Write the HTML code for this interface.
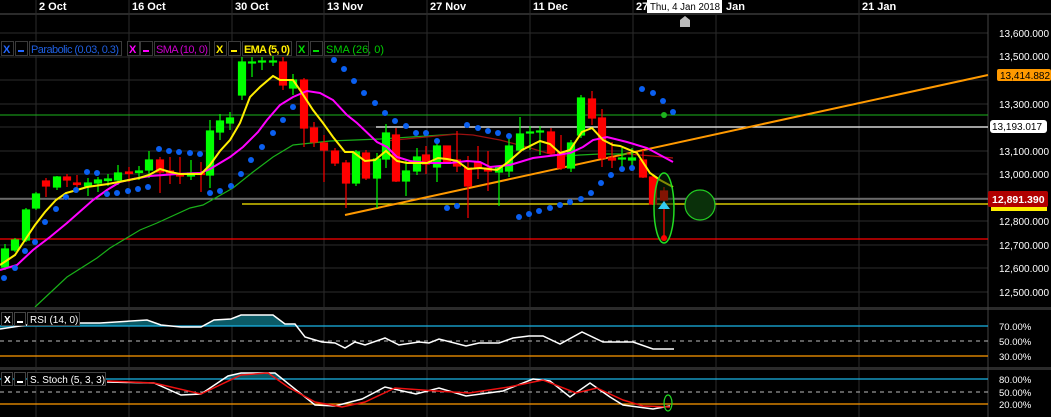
<!DOCTYPE html>
<html><head><meta charset="utf-8"><style>
html,body{margin:0;padding:0;background:#000;width:1051px;height:417px;overflow:hidden}
svg{display:block;font-family:"Liberation Sans",sans-serif}
</style></head><body>
<svg width="1051" height="417" viewBox="0 0 1051 417" xmlns="http://www.w3.org/2000/svg">
<rect width="1051" height="417" fill="#000"/>
<g stroke="#2b2b2b" stroke-width="1">
<line x1="0" y1="33" x2="988" y2="33"/><line x1="0" y1="57" x2="988" y2="57"/><line x1="0" y1="80" x2="988" y2="80"/><line x1="0" y1="104" x2="988" y2="104"/><line x1="0" y1="127" x2="988" y2="127"/><line x1="0" y1="151" x2="988" y2="151"/><line x1="0" y1="174" x2="988" y2="174"/><line x1="0" y1="198" x2="988" y2="198"/><line x1="0" y1="221" x2="988" y2="221"/><line x1="0" y1="245" x2="988" y2="245"/><line x1="0" y1="268" x2="988" y2="268"/><line x1="0" y1="292" x2="988" y2="292"/>
<line x1="36" y1="0" x2="36" y2="417"/><line x1="129" y1="0" x2="129" y2="417"/><line x1="232" y1="0" x2="232" y2="417"/><line x1="324" y1="0" x2="324" y2="417"/><line x1="427" y1="0" x2="427" y2="417"/><line x1="530" y1="0" x2="530" y2="417"/><line x1="633" y1="0" x2="633" y2="417"/><line x1="716" y1="0" x2="716" y2="417"/><line x1="859" y1="0" x2="859" y2="417"/>
</g>
<rect x="0" y="13" width="1051" height="2" fill="#2b2b2b"/>
<rect x="0" y="307" width="1051" height="3" fill="#2b2b2b"/>
<rect x="0" y="367" width="1051" height="3" fill="#2b2b2b"/>
<line x1="988" y1="14" x2="988" y2="417" stroke="#444"/>
<g fill="#fff" font-size="11" font-weight="bold">
<text x="39" y="10">2 Oct</text><text x="132" y="10">16 Oct</text><text x="235" y="10">30 Oct</text><text x="327" y="10">13 Nov</text><text x="430" y="10">27 Nov</text><text x="533" y="10">11 Dec</text><text x="636" y="10">27</text><text x="726" y="10">Jan</text><text x="862" y="10">21 Jan</text>
</g>
<rect x="647" y="0" width="75" height="13" fill="#fff"/>
<text x="650" y="10" font-size="10" fill="#000" textLength="70" lengthAdjust="spacingAndGlyphs">Thu, 4 Jan 2018</text>
<path d="M680 27 V20 L685 16 L690 20 V27 Z" fill="#bbb"/>
<line x1="0" y1="115" x2="988" y2="115" stroke="#1db31d"/>
<line x1="376" y1="127" x2="988" y2="127" stroke="#fff" stroke-width="1.3"/>
<line x1="0" y1="199" x2="988" y2="199" stroke="#aaa"/>
<line x1="242" y1="204" x2="988" y2="204" stroke="#ffee00" stroke-width="1.3"/>
<line x1="0" y1="239" x2="988" y2="239" stroke="#ff0000" stroke-width="1.3"/>
<line x1="345" y1="215" x2="988" y2="75" stroke="#ff9900" stroke-width="2"/>
<polyline fill="none" stroke="#19b019" stroke-width="1.2" points="35,307 67,277 97,258 110,248 140,230 157,223 190,208 203,205 233,188 253,172 273,157 293,145 330,141 380,139 457,134"/>
<polyline fill="none" stroke="#9a1010" stroke-width="1.2" points="385,141 457,134 473,135 500,140 527,147 550,154 567,156"/>
<polyline fill="none" stroke="#19b019" stroke-width="1.2" points="567,156 580,155 600,154 627,154"/>
<polyline fill="none" stroke="#b01010" stroke-width="1.2" points="627,154 653,156 673,158"/>
<g stroke-width="1.2">
<g stroke="#00ff00" fill="#00ff00">
<line x1="5" y1="244" x2="5" y2="270"/><rect x="1.5" y="249" width="7" height="18"/>
<line x1="15" y1="238" x2="15" y2="252"/><rect x="11.5" y="240" width="7" height="10"/>
<line x1="26" y1="208" x2="26" y2="242"/><rect x="22.5" y="210" width="7" height="30"/>
<line x1="36" y1="192" x2="36" y2="210"/><rect x="32.5" y="194" width="7" height="14"/>
<line x1="57" y1="176" x2="57" y2="190"/><rect x="53.5" y="177" width="7" height="10"/>
<line x1="88" y1="178" x2="88" y2="196"/><rect x="84.5" y="183" width="7" height="3"/>
<line x1="98" y1="177" x2="98" y2="192"/><rect x="94.5" y="180" width="7" height="3"/>
<line x1="108" y1="174" x2="108" y2="186"/><rect x="104.5" y="179" width="7" height="1.5"/>
<line x1="118" y1="165" x2="118" y2="185"/><rect x="114.5" y="173" width="7" height="7"/>
<line x1="139" y1="166" x2="139" y2="180"/><rect x="135.5" y="171" width="7" height="1.5"/>
<line x1="149" y1="151" x2="149" y2="178"/><rect x="145.5" y="160" width="7" height="10"/>
<line x1="191" y1="160" x2="191" y2="180"/><rect x="187.5" y="173" width="7" height="3"/>
<line x1="210" y1="120" x2="210" y2="188"/><rect x="206.5" y="131" width="7" height="44"/>
<line x1="220" y1="114" x2="220" y2="140"/><rect x="216.5" y="121" width="7" height="11"/>
<line x1="230" y1="112" x2="230" y2="130"/><rect x="226.5" y="118" width="7" height="5"/>
<line x1="242" y1="57" x2="242" y2="100"/><rect x="238.5" y="62" width="7" height="33"/>
<line x1="252" y1="57" x2="252" y2="77"/><rect x="248.5" y="62" width="7" height="1"/>
<line x1="262" y1="57" x2="262" y2="70"/><rect x="258.5" y="61" width="7" height="1"/>
<line x1="273" y1="55" x2="273" y2="66"/><rect x="269.5" y="61" width="7" height="1"/>
<line x1="293" y1="74" x2="293" y2="95"/><rect x="289.5" y="80" width="7" height="8"/>
<line x1="356" y1="150" x2="356" y2="186"/><rect x="352.5" y="152" width="7" height="31"/>
<line x1="377" y1="153" x2="377" y2="208"/><rect x="373.5" y="159" width="7" height="19"/>
<line x1="386" y1="124" x2="386" y2="168"/><rect x="382.5" y="133" width="7" height="26"/>
<line x1="406" y1="160" x2="406" y2="196"/><rect x="402.5" y="171" width="7" height="10"/>
<line x1="417" y1="148" x2="417" y2="175"/><rect x="413.5" y="157" width="7" height="14"/>
<line x1="437" y1="143" x2="437" y2="182"/><rect x="433.5" y="146" width="7" height="21"/>
<line x1="499" y1="166" x2="499" y2="206"/><rect x="495.5" y="167" width="7" height="5"/>
<line x1="509" y1="136" x2="509" y2="177"/><rect x="505.5" y="146" width="7" height="25"/>
<line x1="520" y1="117" x2="520" y2="152"/><rect x="516.5" y="134" width="7" height="16"/>
<line x1="530" y1="126" x2="530" y2="150"/><rect x="526.5" y="132" width="7" height="1"/>
<line x1="540" y1="126" x2="540" y2="155"/><rect x="536.5" y="131" width="7" height="1"/>
<line x1="571" y1="140" x2="571" y2="172"/><rect x="567.5" y="143" width="7" height="25"/>
<line x1="581" y1="95" x2="581" y2="138"/><rect x="577.5" y="98" width="7" height="37"/>
<line x1="622" y1="148" x2="622" y2="171"/><rect x="618.5" y="158" width="7" height="1"/>
<line x1="632" y1="148" x2="632" y2="167"/><rect x="628.5" y="158" width="7" height="2"/>
</g>
<g stroke="#ff0000" fill="#ff0000">
<line x1="46" y1="178" x2="46" y2="197"/><rect x="42.5" y="181" width="7" height="5"/>
<line x1="67" y1="174" x2="67" y2="187"/><rect x="63.5" y="177" width="7" height="3"/>
<line x1="77" y1="175" x2="77" y2="192"/><rect x="73.5" y="183" width="7" height="1.5"/>
<line x1="129" y1="167" x2="129" y2="182"/><rect x="125.5" y="172" width="7" height="1.5"/>
<line x1="160" y1="157" x2="160" y2="193"/><rect x="156.5" y="160" width="7" height="12"/>
<line x1="170" y1="157" x2="170" y2="184"/><rect x="166.5" y="171" width="7" height="2"/>
<line x1="180" y1="157" x2="180" y2="184"/><rect x="176.5" y="174" width="7" height="2"/>
<line x1="201" y1="162" x2="201" y2="192"/><rect x="197.5" y="173" width="7" height="1.5"/>
<line x1="283" y1="57" x2="283" y2="90"/><rect x="279.5" y="62" width="7" height="23"/>
<line x1="304" y1="78" x2="304" y2="147"/><rect x="300.5" y="80" width="7" height="48"/>
<line x1="314" y1="122" x2="314" y2="147"/><rect x="310.5" y="128" width="7" height="14"/>
<line x1="324" y1="135" x2="324" y2="182"/><rect x="320.5" y="143" width="7" height="7"/>
<line x1="335" y1="148" x2="335" y2="166"/><rect x="331.5" y="151" width="7" height="12"/>
<line x1="346" y1="160" x2="346" y2="208"/><rect x="342.5" y="163" width="7" height="20"/>
<line x1="366" y1="150" x2="366" y2="180"/><rect x="362.5" y="153" width="7" height="25"/>
<line x1="396" y1="128" x2="396" y2="182"/><rect x="392.5" y="135" width="7" height="46"/>
<line x1="426" y1="146" x2="426" y2="174"/><rect x="422.5" y="155" width="7" height="9"/>
<line x1="447" y1="146" x2="447" y2="164"/><rect x="443.5" y="146" width="7" height="17"/>
<line x1="457" y1="131" x2="457" y2="172"/><rect x="453.5" y="160" width="7" height="6"/>
<line x1="468" y1="156" x2="468" y2="218"/><rect x="464.5" y="168" width="7" height="18"/>
<line x1="478" y1="146" x2="478" y2="179"/><rect x="474.5" y="163" width="7" height="4"/>
<line x1="488" y1="151" x2="488" y2="191"/><rect x="484.5" y="168" width="7" height="3"/>
<line x1="551" y1="128" x2="551" y2="155"/><rect x="547.5" y="132" width="7" height="21"/>
<line x1="561" y1="135" x2="561" y2="170"/><rect x="557.5" y="153" width="7" height="15"/>
<line x1="592" y1="91" x2="592" y2="125"/><rect x="588.5" y="99" width="7" height="19"/>
<line x1="602" y1="109" x2="602" y2="167"/><rect x="598.5" y="118" width="7" height="40"/>
<line x1="612" y1="142" x2="612" y2="168"/><rect x="608.5" y="158" width="7" height="2"/>
<line x1="643" y1="150" x2="643" y2="178"/><rect x="639.5" y="160" width="7" height="17"/>
<line x1="653" y1="175" x2="653" y2="205"/><rect x="649.5" y="177" width="7" height="27"/>
<line x1="664" y1="187" x2="664" y2="238"/><rect x="660.5" y="191" width="7" height="9"/>
</g>
</g>
<polyline fill="none" stroke="#ff00ff" stroke-width="2" points="0,270 17,265 33,250 50,237 67,223 93,200 107,190 120,182 133,179 150,176 177,174 200,173 210,169 230,157 243,147 258,132 267,120 280,105 293,97 307,91 320,93 333,100 347,115 357,123 377,142 387,147 397,157 410,161 427,163 450,163 467,161 480,162 490,167 510,165 533,158 557,155 570,153 583,147 593,140 607,137 627,142 647,148 673,162"/>
<polyline fill="none" stroke="#ffee00" stroke-width="2" points="0,265 15,255 25,240 35,225 45,212 56,200 66,193 77,190 87,187 108,184 129,180 139,178 149,175 160,169 170,172 180,174 201,174 210,165 220,151 230,140 240,123 250,97 260,87 273,76 280,80 293,80 300,90 313,110 323,123 333,137 345,152 353,152 365,161 375,160 386,151 397,161 407,163 427,163 438,158 447,159 457,161 468,169 480,168 497,170 507,163 522,150 540,141 550,144 560,153 570,150 582,132 592,128 603,140 613,145 620,146 637,153 650,173 660,180 673,187"/>
<g fill="#0a5ff0">
<circle cx="4" cy="278" r="3"/><circle cx="15" cy="268" r="3"/><circle cx="25" cy="251" r="3"/><circle cx="35" cy="242" r="3"/><circle cx="45" cy="222" r="3"/><circle cx="56" cy="209" r="3"/><circle cx="66" cy="197" r="3"/><circle cx="76" cy="190" r="3"/><circle cx="87" cy="172" r="3"/><circle cx="97" cy="173" r="3"/><circle cx="107" cy="194" r="3"/><circle cx="117" cy="193" r="3"/><circle cx="128" cy="191" r="3"/><circle cx="138" cy="189" r="3"/><circle cx="148" cy="187" r="3"/><circle cx="159" cy="149" r="3"/><circle cx="169" cy="151" r="3"/><circle cx="179" cy="152" r="3"/><circle cx="190" cy="153" r="3"/><circle cx="200" cy="154" r="3"/><circle cx="210" cy="193" r="3"/><circle cx="220" cy="191" r="3"/><circle cx="231" cy="186" r="3"/><circle cx="241" cy="174" r="3"/><circle cx="251" cy="160" r="3"/><circle cx="262" cy="147" r="3"/><circle cx="273" cy="133" r="3"/><circle cx="283" cy="120" r="3"/><circle cx="293" cy="107" r="3"/><circle cx="334" cy="60" r="3"/><circle cx="344" cy="69" r="3"/><circle cx="354" cy="81" r="3"/><circle cx="364" cy="93" r="3"/><circle cx="375" cy="103" r="3"/><circle cx="385" cy="113" r="3"/><circle cx="395" cy="121" r="3"/><circle cx="406" cy="126" r="3"/><circle cx="416" cy="133" r="3"/><circle cx="426" cy="133" r="3"/><circle cx="437" cy="141" r="3"/><circle cx="447" cy="208" r="3"/><circle cx="457" cy="206" r="3"/><circle cx="467" cy="125" r="3"/><circle cx="478" cy="128" r="3"/><circle cx="488" cy="131" r="3"/><circle cx="498" cy="133" r="3"/><circle cx="509" cy="136" r="3"/><circle cx="519" cy="217" r="3"/><circle cx="529" cy="214" r="3"/><circle cx="539" cy="211" r="3"/><circle cx="550" cy="208" r="3"/><circle cx="560" cy="205" r="3"/><circle cx="570" cy="202" r="3"/><circle cx="581" cy="199" r="3"/><circle cx="591" cy="193" r="3"/><circle cx="601" cy="183" r="3"/><circle cx="611" cy="175" r="3"/><circle cx="622" cy="169" r="3"/><circle cx="632" cy="168" r="3"/><circle cx="642" cy="89" r="3"/><circle cx="653" cy="93" r="3"/><circle cx="663" cy="101" r="3"/><circle cx="673" cy="112" r="3"/>
</g>
<circle cx="664" cy="115" r="3" fill="#1db31d"/>
<ellipse cx="664" cy="208" rx="10" ry="35" fill="#062806" fill-opacity="0.5" stroke="#22dd22" stroke-width="1.5"/>
<line x1="664" y1="208" x2="664" y2="238" stroke="#ff0000" stroke-width="1.2"/>
<circle cx="664" cy="238" r="3" fill="#ff0000"/>
<path d="M658 209 L664 201 L670 209 Z" fill="#33ccee"/>
<circle cx="700" cy="205" r="15" fill="#0a300a" stroke="#22cc22" stroke-width="1.2"/>
<g stroke="#3a3a3a" fill="#000">
<rect x="1.5" y="41.5" width="12" height="14"/><rect x="15.5" y="41.5" width="12" height="14"/><rect x="29.5" y="41.5" width="92" height="14"/>
<rect x="127.5" y="41.5" width="12" height="14"/><rect x="140.5" y="41.5" width="12" height="14"/><rect x="154.5" y="41.5" width="55" height="14"/>
<rect x="214.5" y="41.5" width="12" height="14"/><rect x="228.5" y="41.5" width="12" height="14"/><rect x="242.5" y="41.5" width="49" height="14"/>
<rect x="296.5" y="41.5" width="12" height="14"/><rect x="310.5" y="41.5" width="12" height="14"/><rect x="324.5" y="41.5" width="44" height="14"/>
</g>
<g font-size="11" font-weight="bold">
<text x="3" y="53" fill="#2266ff">X</text><rect x="18" y="50" width="6" height="2" fill="#2266ff"/>
<text x="31" y="53" fill="#1f5fe0" font-weight="normal" textLength="88">Parabolic (0.03, 0.3)</text>
<text x="129" y="53" fill="#ff00ff">X</text><rect x="143" y="50" width="6" height="2" fill="#ff00ff"/>
<text x="156" y="53" fill="#cc00cc" font-weight="normal" textLength="52">SMA (10, 0)</text>
<text x="216" y="53" fill="#ffee00">X</text><rect x="231" y="50" width="6" height="2" fill="#ffee00"/>
<text x="244" y="53" fill="#ffee00" textLength="46">EMA (5, 0)</text>
<text x="298" y="53" fill="#00dd00">X</text><rect x="313" y="50" width="6" height="2" fill="#00dd00"/>
<text x="326" y="53" fill="#00cc00" font-weight="normal">SMA (26, 0)</text>
</g>
<g fill="#fff" font-size="10">
<text x="999" y="37">13,600.000</text><text x="999" y="60">13,500.000</text><text x="999" y="108">13,300.000</text><text x="999" y="155">13,100.000</text><text x="999" y="178">13,000.000</text><text x="999" y="225">12,800.000</text><text x="999" y="249">12,700.000</text><text x="999" y="272">12,600.000</text><text x="999" y="296">12,500.000</text>
</g>
<rect x="997" y="69" width="54" height="12" rx="2" fill="#ff9900"/>
<text x="1000" y="79" font-size="10" fill="#000">13,414.882</text>
<rect x="990" y="120" width="57" height="13" rx="3" fill="#fff"/>
<text x="992" y="130" font-size="10" fill="#000">13,193.017</text>
<rect x="991" y="205" width="56" height="6" fill="#ffee00"/>
<rect x="988" y="191" width="60" height="16" rx="2" fill="#b00000"/>
<text x="992" y="203" font-size="10.5" font-weight="bold" fill="#fff">12,891.390</text>
<path d="M0,329 L20,326 L40,323 L100,323 L147,320 L161,325 L181,327 L201,327 L214,320 L231,319 L241,315 L273,315 L285,324 L295,324 L298,326 L0,326 Z" fill="#0b5a66"/>
<line x1="0" y1="326" x2="988" y2="326" stroke="#19b5e5" stroke-width="1.3"/>
<line x1="0" y1="341" x2="988" y2="341" stroke="#bbb" stroke-dasharray="4,4"/>
<line x1="0" y1="356" x2="988" y2="356" stroke="#ff9900" stroke-width="1.3"/>
<polyline fill="none" stroke="#fff" stroke-width="1.5" points="0,329 20,326 40,323 100,323 147,320 161,325 181,327 201,327 214,320 231,319 241,315 273,315 285,324 295,324 305,337 322,342 335,343 345,348 355,342 365,345 385,338 399,345 419,342 429,343 439,339 466,346 479,343 499,343 513,338 529,336 543,336 560,344 582,332 603,342 633,342 653,349 674,349"/>
<rect x="1.5" y="312.5" width="11" height="13" fill="#000" stroke="#444"/><rect x="14.5" y="312.5" width="11" height="13" fill="#000" stroke="#444"/><rect x="27.5" y="312.5" width="52" height="13" fill="#000" stroke="#444"/>
<text x="4" y="323" font-size="10" font-weight="bold" fill="#fff">X</text><rect x="17" y="321" width="6" height="2" fill="#fff"/>
<text x="30" y="323" font-size="10" fill="#fff">RSI (14, 0)</text>
<g fill="#fff" font-size="9.5"><text x="999" y="330">70.00%</text><text x="999" y="345">50.00%</text><text x="999" y="360">30.00%</text></g>
<path d="M228,376 L241,373 L275,373 L283,379 L225,379 Z" fill="#0b5a66"/>
<line x1="0" y1="379" x2="988" y2="379" stroke="#19b5e5" stroke-width="1.3"/>
<line x1="0" y1="392" x2="988" y2="392" stroke="#bbb" stroke-dasharray="4,4"/>
<line x1="0" y1="404" x2="988" y2="404" stroke="#ff9900" stroke-width="1.3"/>
<polyline fill="none" stroke="#fff" stroke-width="1.5" points="107,382 154,383 181,395 201,394 228,376 241,373 275,373 315,405 335,406 362,399 385,387 416,394 439,388 466,396 503,391 533,379 550,381 570,397 590,383 610,397 623,405 653,409 670,406"/>
<polyline fill="none" stroke="#ee1111" stroke-width="1.5" points="107,381 154,383 201,394 241,375 268,373 288,387 315,402 342,407 365,402 395,388 436,391 469,393 509,387 543,380 576,393 597,388 623,400 643,406 670,407"/>
<ellipse cx="668" cy="403" rx="4" ry="8" fill="none" stroke="#22dd22" stroke-width="1.2"/>
<rect x="1.5" y="372.5" width="11" height="13" fill="#000" stroke="#444"/><rect x="14.5" y="372.5" width="11" height="13" fill="#000" stroke="#444"/><rect x="27.5" y="372.5" width="78" height="13" fill="#000" stroke="#444"/>
<text x="4" y="383" font-size="10" font-weight="bold" fill="#fff">X</text><rect x="17" y="381" width="6" height="2" fill="#fff"/>
<text x="30" y="383" font-size="10" fill="#fff">S. Stoch (5, 3, 3)</text>
<g fill="#fff" font-size="9.5"><text x="999" y="383">80.00%</text><text x="999" y="396">50.00%</text><text x="999" y="408">20.00%</text></g>
</svg>
</body></html>
